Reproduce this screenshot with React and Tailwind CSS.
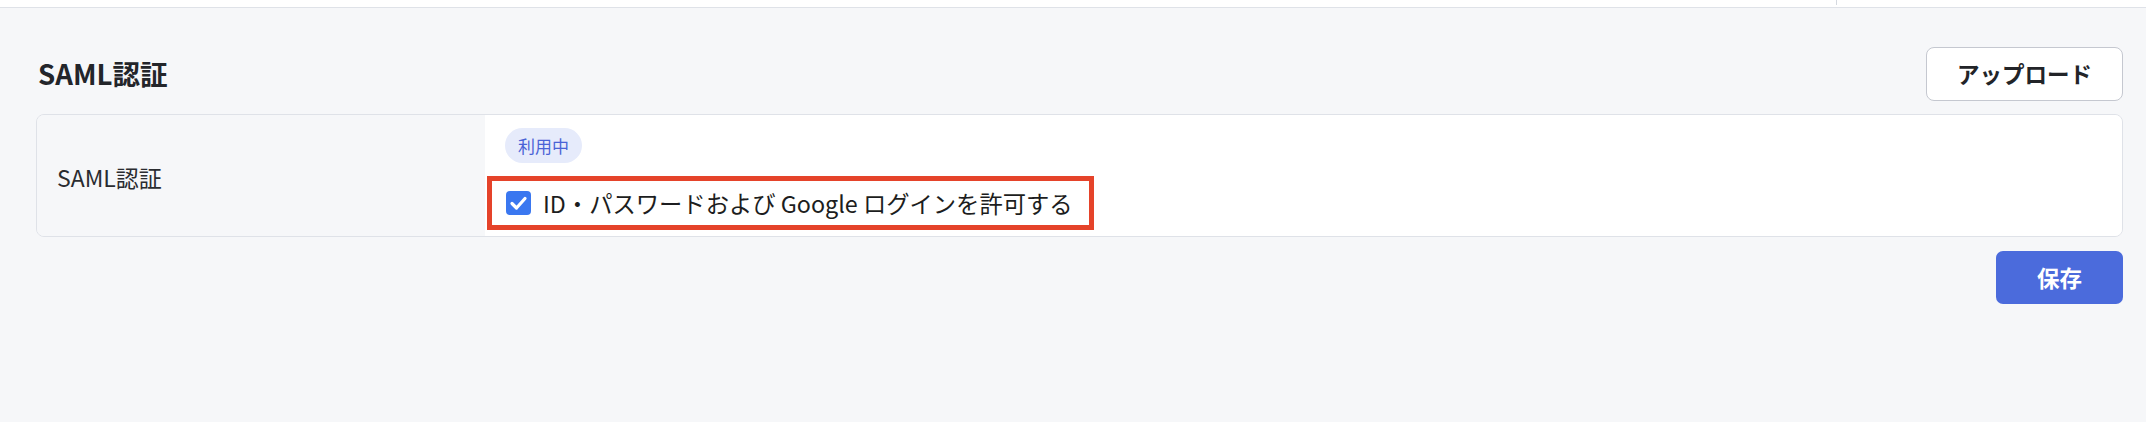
import React from "react";

const font = { fontFamily: '"Noto Sans CJK JP", "Noto Sans", sans-serif' };

function CheckIcon() {
  return (
    <svg width="25" height="24" viewBox="0 0 25 24" className="shrink-0">
      <rect x="0" y="0" width="25" height="24" rx="4" fill="#3a77f0" />
      <path
        d="M6 12.5 L10.5 17 L19 7.5"
        fill="none"
        stroke="#ffffff"
        strokeWidth="3.2"
        strokeLinecap="round"
        strokeLinejoin="round"
      />
    </svg>
  );
}

export default function App() {
  return (
    <div className="w-full h-[422px] bg-[#f6f7f9] text-[#222428]" style={font}>
      {/* top navigation strip */}
      <div className="h-[8px] bg-white border-b border-[#dfe2e8] flex justify-end">
        <div className="w-[310px] h-[5px] border-l border-[#d5d9e0]" />
      </div>

      <div className="pl-[36px] pr-[23px]">
        {/* section header */}
        <div className="flex items-center justify-between pt-[39px]">
          <h2 className="text-[27.6px] font-bold leading-none text-[#23252a] pl-[2px]">SAML認証</h2>
          <button className="w-[197px] h-[54px] bg-white border border-[#c5c8d0] rounded-[8px] text-[22.5px] font-bold text-[#222428] flex items-center justify-center">
            アップロード
          </button>
        </div>

        {/* settings card */}
        <div className="mt-[13px] h-[123px] border border-[#dfe2e8] rounded-[8px] flex overflow-hidden">
          <div className="w-[448px] shrink-0 bg-[#f6f7f9] flex items-center pl-[20px] pt-[4px] text-[23px] text-[#2a2c30]">
            SAML認証
          </div>
          <div className="flex-1 bg-white pl-[20px] pt-[13px]">
            <span className="inline-flex items-center h-[35px] px-[13px] rounded-full bg-[#e6ebfb] text-[#4a63d6] text-[17px]">
              利用中
            </span>
            <div className="mt-[13px] -ml-[18px] w-fit h-[54px] border-[5px] border-[#e5432a] flex items-center gap-[12px] pl-[14px] pr-[16px]">
              <CheckIcon />
              <span className="text-[23.3px] text-[#1c1d20] whitespace-nowrap">
                ID・パスワードおよび Google ログインを許可する
              </span>
            </div>
          </div>
        </div>

        {/* actions */}
        <div className="flex justify-end mt-[14px]">
          <button className="w-[127px] h-[53px] rounded-[7px] bg-[#4b6bdc] text-white text-[22.5px] font-bold flex items-center justify-center">
            保存
          </button>
        </div>
      </div>
    </div>
  );
}
